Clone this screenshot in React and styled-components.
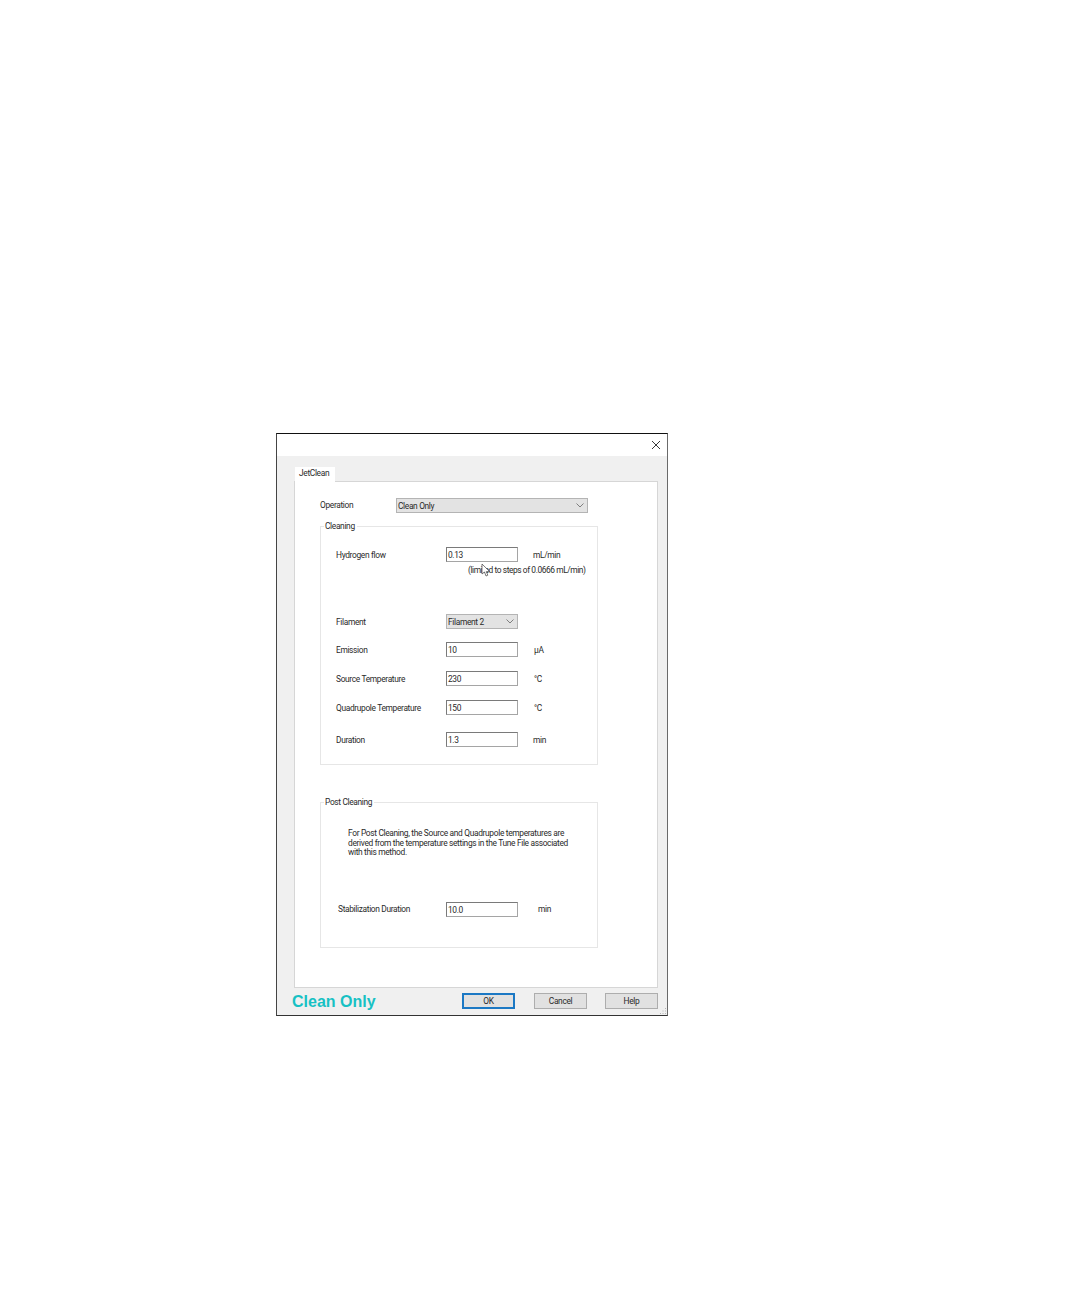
import React from "react";
import styled, { createGlobalStyle } from "styled-components";

const Global = createGlobalStyle`
  html, body { margin: 0; padding: 0; background: #fff; }
  body { font-family: Roboto, "Liberation Sans", Arial, sans-serif; }
`;
const Page = styled.div`
  width: 1080px;
  height: 1296px;
  padding: 433px 0 0 276px;
  box-sizing: border-box;
`;
const Dialog = styled.div`
  position: relative;
  width: 392px;
  height: 583px;
  box-sizing: border-box;
  background: #f0f0f0;
  border: 1px solid #6a6a6a;
  border-top-color: #111;
  border-bottom-color: #333;
  border-left-color: #444;
  display: flex;
  flex-direction: column;
  font-size: 8.4px;
  letter-spacing: -0.34px;
  color: #2a2a2a;
`;
const TitleBar = styled.div`
  height: 22px;
  flex: none;
  background: #fff;
  display: flex;
  justify-content: flex-end;
  align-items: center;
  padding-right: 6px;
`;
const Body = styled.div`
  padding: 10px 9px 0 17px;
  flex: none;
`;
const Tab = styled.div`
  width: 40px;
  height: 16px;
  box-sizing: border-box;
  margin-left: 1px;
  margin-bottom: -1px;
  position: relative;
  background: #fff;
  border-top: 1px solid #f0f0f0;
  padding: 2px 0 0 4px;
  line-height: 9px;
`;
const TabPage = styled.div`
  height: 507px;
  width: 364px;
  box-sizing: border-box;
  background: #fff;
  border: 1px solid #d6d6d6;
  padding: 16px 0 0 25px;
`;
const OperationRow = styled.div`
  display: flex;
  align-items: center;
  height: 15px;
`;
const OperationLabel = styled.div`
  width: 76px;
  flex: none;
  margin-top: -1px;
`;
const Select = styled.div`
  width: ${(p) => p.$w}px;
  height: 15px;
  box-sizing: border-box;
  background: #e3e3e3;
  border: 1px solid #b4b4b4;
  display: flex;
  align-items: center;
  justify-content: space-between;
  padding: 0 3px 0 1px;
`;
const Group = styled.div`
  position: relative;
  width: 278px;
  height: ${(p) => p.$h}px;
  box-sizing: border-box;
  margin-top: ${(p) => p.$top}px;
  border: 1px solid #e6e6e6;
  padding: ${(p) => p.$padTop}px 0 0 ${(p) => p.$padLeft}px;
`;
const Legend = styled.div`
  position: absolute;
  top: -5px;
  left: 3px;
  padding: 0 2px 0 1px;
  background: #fff;
  line-height: 9px;
`;
const Row = styled.div`
  display: grid;
  grid-template-columns: ${(p) => p.$label}px 72px auto;
  align-items: center;
  height: 15px;
  margin-top: ${(p) => p.$top || 0}px;
`;
const Unit = styled.span`
  margin-left: ${(p) => p.$gap || 15}px;
`;
const Input = styled.div`
  height: 15px;
  box-sizing: border-box;
  background: #fff;
  border: 1px solid #7a7a7a;
  border-bottom-color: #a5a5a5;
  border-right-color: #a5a5a5;
  padding-left: 1px;
  line-height: 14px;
`;
const Hint = styled.div`
  margin: 3px 0 0 132px;
  line-height: 10px;
  white-space: nowrap;
  letter-spacing: -0.42px;
`;
const Para = styled.p`
  margin: 0 0 44px 10px;
  width: 240px;
  line-height: 9.5px;
  letter-spacing: -0.33px;
`;
const Footer = styled.div`
  flex: 1;
  display: flex;
  align-items: flex-start;
  padding: 5px 9px 0 15px;
`;
const Status = styled.div`
  font-family: "Liberation Sans", Arial, sans-serif;
  font-size: 16px;
  letter-spacing: 0;
  font-weight: bold;
  line-height: 18px;
  color: #17c1c4;
  margin-right: auto;
`;
const Btn = styled.div`
  width: ${(p) => p.$w}px;
  height: 16px;
  box-sizing: border-box;
  margin-left: ${(p) => p.$left}px;
  background: #e1e1e1;
  border: ${(p) => (p.$primary ? "2px solid #1b78c4" : "1px solid #adadad")};
  display: flex;
  align-items: center;
  justify-content: center;
`;
const Grip = styled.svg`
  position: absolute;
  right: 0;
  bottom: 0;
`;
const Cursor = styled.svg`
  position: absolute;
  left: 204px;
  top: 129px;
`;

const Chevron = () => (
  <svg width="8" height="5" viewBox="0 0 8 5" fill="none" stroke="#666" strokeWidth="0.8">
    <path d="M0.5 0.5 L4 4 L7.5 0.5" />
  </svg>
);

export default function App() {
  return (
    <Page>
      <Global />
      <Dialog>
        <TitleBar>
          <svg width="10" height="10" viewBox="0 0 10 10" stroke="#222" strokeWidth="0.9">
            <path d="M1 1 L9 9 M9 1 L1 9" />
          </svg>
        </TitleBar>
        <Body>
          <Tab>JetClean</Tab>
          <TabPage>
            <OperationRow>
              <OperationLabel>Operation</OperationLabel>
              <Select $w={192}>
                Clean Only
                <Chevron />
              </Select>
            </OperationRow>
            <Group $h={239} $top={13} $padTop={20} $padLeft={15}>
              <Legend>Cleaning</Legend>
              <Row $label={110}>
                <span>Hydrogen flow</span>
                <Input>0.13</Input>
                <Unit>mL/min</Unit>
              </Row>
              <Hint>(limited to steps of 0.0666 mL/min)</Hint>
              <Row $label={110} $top={39}>
                <span>Filament</span>
                <Select $w={72}>
                  Filament 2
                  <Chevron />
                </Select>
              </Row>
              <Row $label={110} $top={13}>
                <span>Emission</span>
                <Input>10</Input>
                <Unit $gap={16}>µA</Unit>
              </Row>
              <Row $label={110} $top={14}>
                <span>Source Temperature</span>
                <Input>230</Input>
                <Unit $gap={16}>°C</Unit>
              </Row>
              <Row $label={110} $top={14}>
                <span>Quadrupole Temperature</span>
                <Input>150</Input>
                <Unit $gap={16}>°C</Unit>
              </Row>
              <Row $label={110} $top={17}>
                <span>Duration</span>
                <Input>1.3</Input>
                <Unit>min</Unit>
              </Row>
            </Group>
            <Group $h={146} $top={37} $padTop={26} $padLeft={17}>
              <Legend>Post Cleaning</Legend>
              <Para>
                For Post Cleaning, the Source and Quadrupole temperatures are
                <br />
                derived from the temperature settings in the Tune File associated
                <br />
                with this method.
              </Para>
              <Row $label={108}>
                <span>Stabilization Duration</span>
                <Input>10.0</Input>
                <Unit $gap={20}>min</Unit>
              </Row>
            </Group>
          </TabPage>
        </Body>
        <Footer>
          <Status>Clean Only</Status>
          <Btn $w={53} $left={0} $primary>OK</Btn>
          <Btn $w={53} $left={19}>Cancel</Btn>
          <Btn $w={53} $left={18}>Help</Btn>
        </Footer>
        <Grip width="8" height="8" viewBox="0 0 8 8" fill="#b5b5b5">
          <rect x="6" y="1" width="1" height="1" />
          <rect x="3.5" y="3.5" width="1" height="1" />
          <rect x="6" y="3.5" width="1" height="1" />
          <rect x="1" y="6" width="1" height="1" />
          <rect x="3.5" y="6" width="1" height="1" />
          <rect x="6" y="6" width="1" height="1" />
        </Grip>
        <Cursor width="10" height="15" viewBox="0 0 10 15">
          <path d="M1 1 L1 11 L3.5 9 L5 13 L6.8 12.2 L5.3 8.6 L8.5 8.4 Z" fill="#fff" stroke="#444" strokeWidth="0.7" />
        </Cursor>
      </Dialog>
    </Page>
  );
}
